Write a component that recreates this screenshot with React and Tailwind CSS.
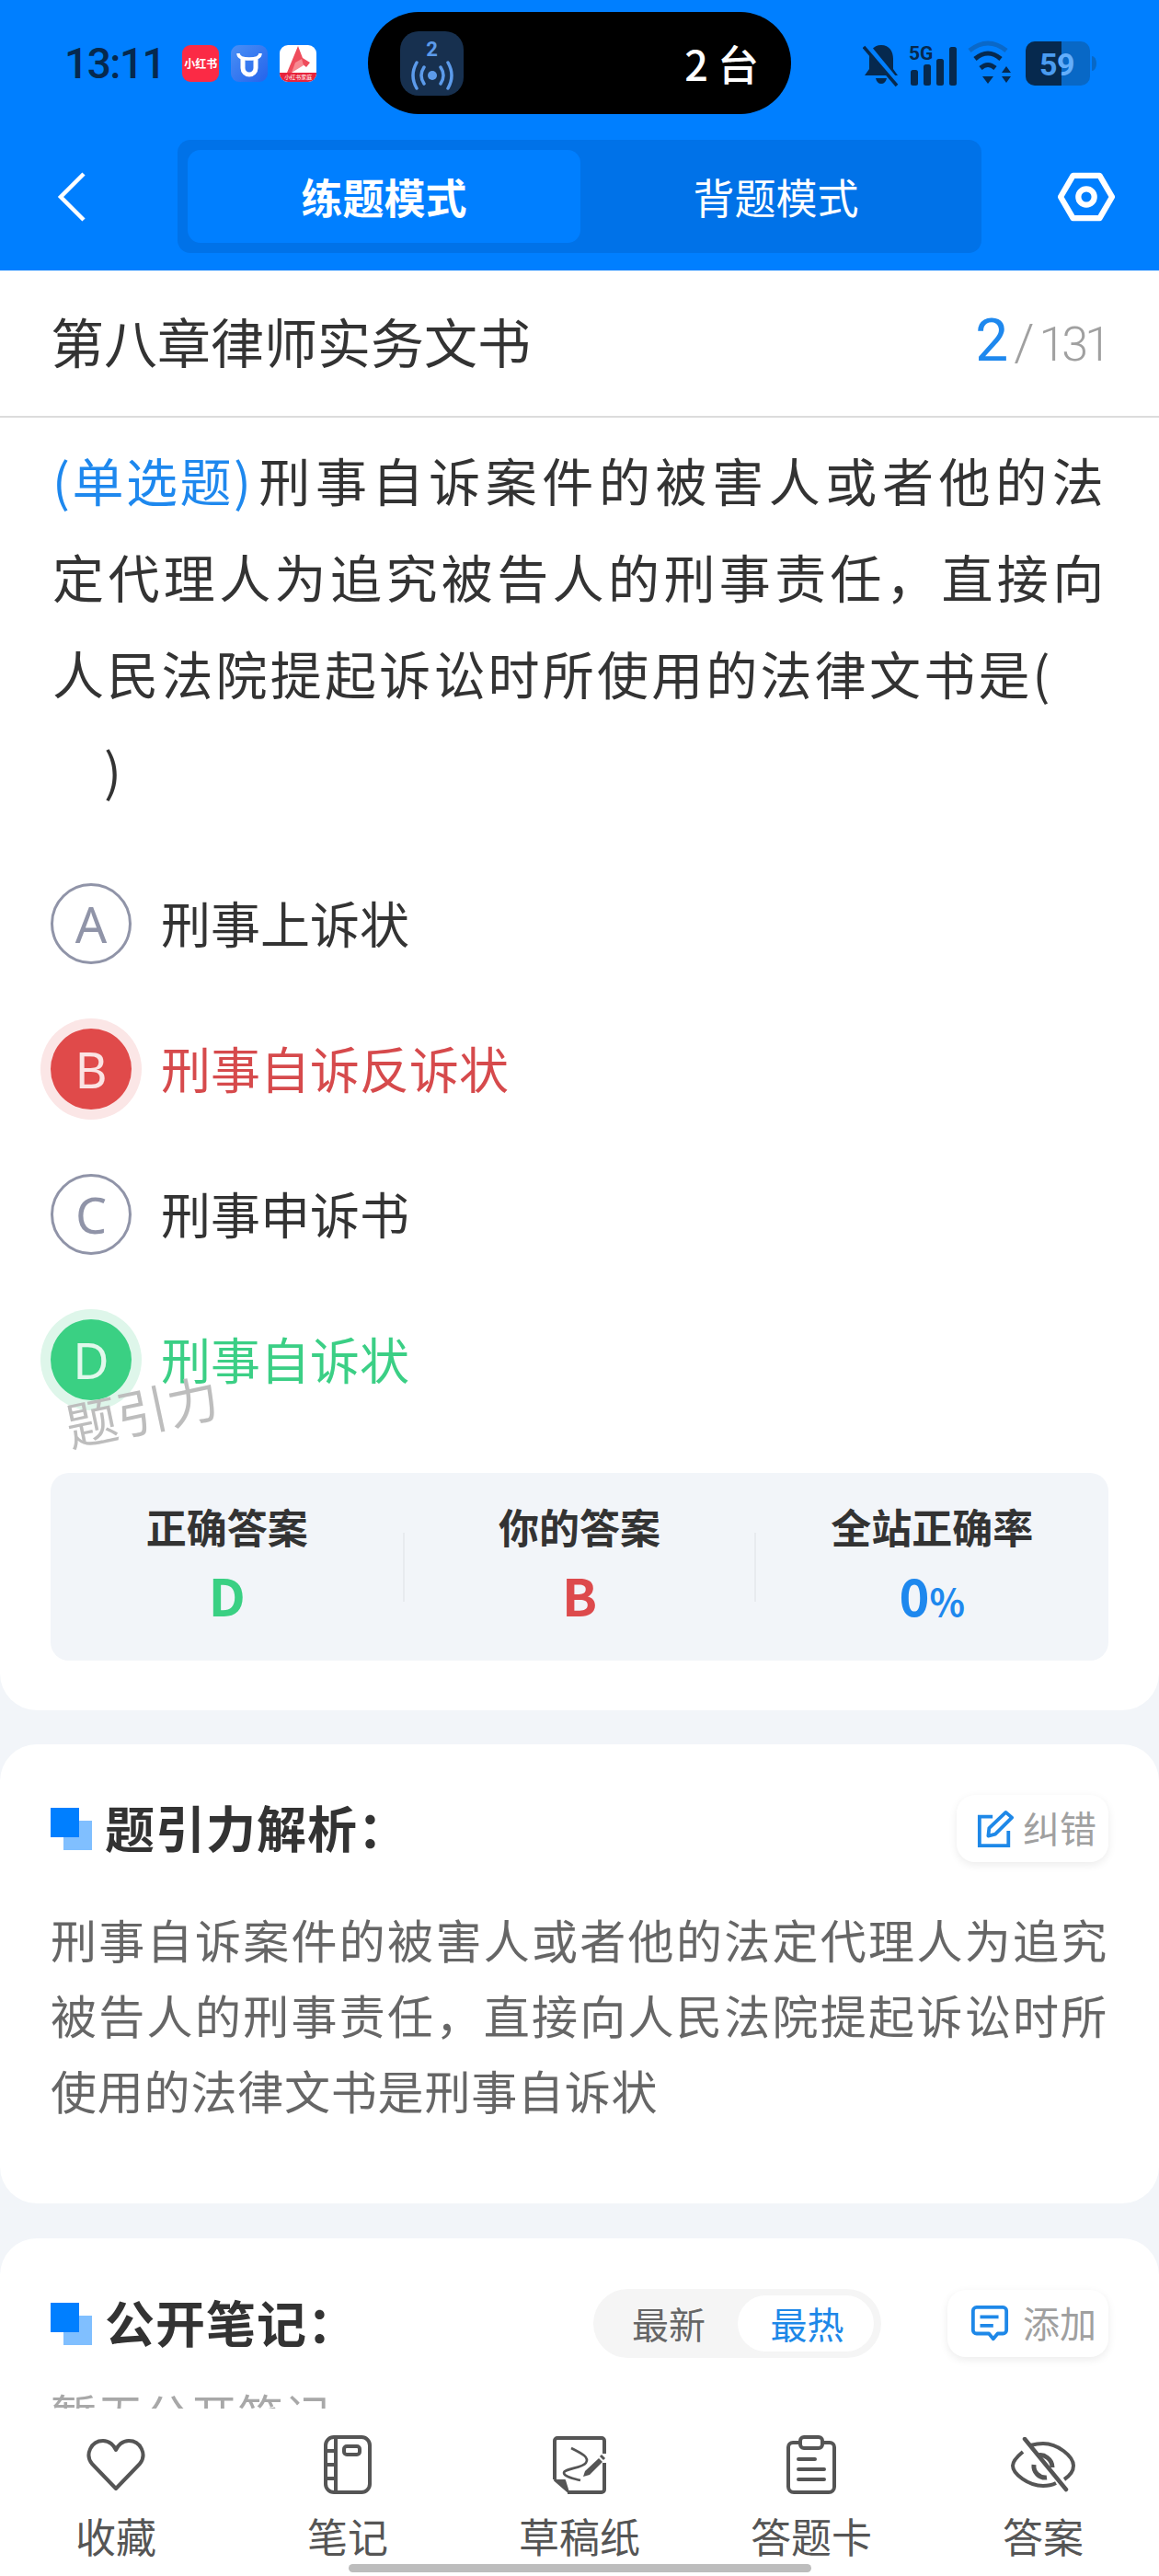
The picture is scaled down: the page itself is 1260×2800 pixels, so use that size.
import React from 'react';

const cjk = { fontFamily: '"Noto Sans CJK SC", "Noto Sans", sans-serif' };

function AppBadges() {
    return (
        <div className="flex items-center gap-[13px] ml-[19px]">
            <div className="w-[40px] h-[40px] rounded-[9px] bg-[#FB2A45] flex items-center justify-center">
                <span className="text-white text-[12px] font-bold leading-none whitespace-nowrap">小红书</span>
            </div>
            <div className="w-[40px] h-[40px] rounded-[9px] bg-gradient-to-br from-[#4A8FF5] to-[#2563EB] flex items-center justify-center">
                <svg viewBox="0 0 40 40" className="w-[40px] h-[40px]">
                    <path d="M8 9 C8 14 13 15 20 15 C27 15 32 14 32 9" stroke="#fff" strokeWidth="3.5" fill="none" />
                    <path d="M13 15 V25 a7 7 0 0 0 14 0 V15" fill="none" stroke="#fff" strokeWidth="5" />
                </svg>
            </div>
            <div className="w-[40px] h-[40px] rounded-[9px] bg-white overflow-hidden flex flex-col">
                <svg viewBox="0 0 40 30" className="w-[40px] h-[30px]">
                    <path d="M20 1 L25 14 L33 19 L29 24 L24 20 L13 30 H8 Z" fill="#EF4C5C" />
                    <path d="M17 19 L24 15 L26 22 L13 30 Z" fill="#F78A92" />
                </svg>
                <div className="h-[10px] bg-[#E8243C] flex items-center justify-center overflow-hidden">
                    <span className="text-white text-[6px] leading-none whitespace-nowrap">小红书家庭</span>
                </div>
            </div>
        </div>
    );
}

function StatusIcons() {
    return (
        <svg viewBox="0 0 270 56" className="w-[270px] h-[56px]">
            <g fill="#06294E">
                <path d="M20 8c9 0 13 7 13 15v11l5 7H2l5-7V23c0-8 4-15 13-15z" />
                <path d="M14 44h12c-1 4-3 6-6 6s-5-2-6-6z" />
            </g>
            <path d="M2 6 L38 50" stroke="#007FFF" strokeWidth="7" />
            <path d="M1 10 L37 52" stroke="#06294E" strokeWidth="3.5" />
            <text x="50" y="24" fontSize="21" fontWeight="700" fill="#06294E" fontFamily="Roboto, sans-serif">5G</text>
            <g fill="#06294E">
                <rect x="52" y="35" width="8" height="17" rx="2.5" />
                <rect x="66" y="29" width="8" height="23" rx="2.5" />
                <rect x="80" y="23" width="8" height="29" rx="2.5" />
                <rect x="94" y="10" width="8" height="42" rx="2.5" />
            </g>
            <path d="M116 14 Q136 -2 156 14" stroke="#0A68C8" strokeWidth="5" fill="none" />
            <path d="M122 23 Q136 11 150 23" stroke="#06294E" strokeWidth="5" fill="none" />
            <path d="M128 33 Q136 26 144 33" stroke="#06294E" strokeWidth="5" fill="none" />
            <path d="M130 42 h12 l-6 8z" fill="#06294E" />
            <path d="M151 38 l5 -7 5 7z M151 42 h10 l-5 7z" fill="#06294E" />
            <rect x="177" y="4" width="70" height="48" rx="10" fill="#0868C6" />
            <path d="M187 4 H216 V52 H187 a10 10 0 0 1 -10 -10 V14 a10 10 0 0 1 10 -10z" fill="#06294E" />
            <path d="M249 20 a5 8 0 0 1 0 16z" fill="#0868C6" />
            <text x="192" y="41" fontSize="34" fontWeight="700" fill="#4A9BF0" fontFamily="Roboto, sans-serif">5</text>
            <text x="211" y="41" fontSize="34" fontWeight="700" fill="#64AEFA" fontFamily="Roboto, sans-serif">9</text>
        </svg>
    );
}

function Header() {
    return (
        <div className="bg-[#007FFF] h-[294px] shrink-0">
            <div className="h-[152px] flex items-start pt-[13px]">
                <div className="w-[400px] pl-[70px] pt-[35px] flex items-center">
                    <span className="text-[46px] leading-[42px] font-medium text-[#06294E] tracking-[-1.5px]" style={{ fontFamily: 'Roboto, sans-serif' }}>13:11</span>
                    <AppBadges />
                </div>
                <div className="w-[460px] h-[111px] rounded-full bg-black flex items-center justify-between pl-[35px] pr-[35px]">
                    <div className="w-[69px] h-[70px] rounded-[20px] bg-[#17304F] flex flex-col items-center">
                        <span className="text-[#5C9BEB] text-[22px] font-bold leading-[22px] mt-[9px]" style={{ fontFamily: 'Roboto, sans-serif' }}>2</span>
                        <svg viewBox="0 0 52 34" className="w-[52px] h-[34px]" fill="none" stroke="#5C9BEB" strokeWidth="3.5" strokeLinecap="round">
                            <circle cx="26" cy="17" r="5" fill="#5C9BEB" stroke="none" />
                            <path d="M17 8 Q11 17 17 26 M35 8 Q41 17 35 26 M9 3 Q1 17 9 31 M43 3 Q51 17 43 31" />
                        </svg>
                    </div>
                    <span className="text-white text-[45px] font-medium leading-none" style={cjk}>2 台</span>
                </div>
                <div className="flex-1 pl-[78px] pt-[28px]">
                    <StatusIcons />
                </div>
            </div>
            <div className="h-[123px] flex items-center">
                <div className="w-[193px] pl-[62px]">
                    <svg viewBox="0 0 32 54" className="w-[32px] h-[54px]" fill="none" stroke="#fff" strokeWidth="4.5">
                        <path d="M29 2 L4 27 L29 52" />
                    </svg>
                </div>
                <div className="w-[874px] h-[123px] rounded-[14px] bg-[#0072E8] flex p-[11px]">
                    <div className="w-[427px] rounded-[14px] bg-[#007FFF] flex items-center justify-center text-white font-bold text-[45px]" style={cjk}>练题模式</div>
                    <div className="flex-1 flex items-center justify-center text-white text-[45px]" style={cjk}>背题模式</div>
                </div>
                <div className="flex-1 flex justify-end pr-[48px]">
                    <svg viewBox="0 0 64 56" className="w-[62px] h-[54px]" fill="none" stroke="#fff" strokeWidth="6.5" strokeLinejoin="round">
                        <path d="M3 28 L17 4 H47 L61 28 L47 52 H17 Z" />
                        <circle cx="32" cy="28" r="9" />
                    </svg>
                </div>
            </div>
        </div>
    );
}

function OptionRow({ letter, text, state }) {
    const textColor = state === 'wrong' ? 'text-[#D64A4C]' : state === 'right' ? 'text-[#3BCF85]' : 'text-[#333333]';
    let circle = 'border-[3px] border-[#9094A8] text-[#9094A8]';
    if (state === 'wrong') circle = 'bg-[#E04A4A] text-[#FBE3E3] shadow-[0_0_0_11px_#FBE6E6]';
    if (state === 'right') circle = 'bg-[#3AD083] text-[#E2F8EC] shadow-[0_0_0_11px_#DEF6EA]';
    return (
        <div className="h-[158px] flex items-center px-[55px]">
            <div className={`w-[88px] h-[88px] rounded-full flex items-center justify-center text-[54px] shrink-0 ${circle}`} style={{ fontFamily: '"Noto Sans", sans-serif' }}>
                {letter}
            </div>
            <span className={`ml-[32px] mb-[3px] text-[54px] leading-none ${textColor}`} style={cjk}>{text}</span>
        </div>
    );
}

function StatCell({ label, children }) {
    return (
        <div className="flex flex-col items-center justify-start pt-[33px]">
            <div className="text-[44px] font-bold leading-[50px] text-[#333333]" style={cjk}>{label}</div>
            <div className="mt-[18px] text-[56px] font-bold leading-[62px]" style={cjk}>{children}</div>
        </div>
    );
}

function SectionMark() {
    return (
        <div className="relative w-[45px] h-[46px] shrink-0">
            <div className="absolute right-0 bottom-0 w-[31px] h-[32px] bg-[#80BFFF]" />
            <div className="absolute left-0 top-0 w-[31px] h-[32px] bg-[#007FFF]" />
        </div>
    );
}

function GhostButton({ icon, label, className }) {
    return (
        <div className={`h-[73px] rounded-[20px] bg-white shadow-[0_3px_10px_rgba(0,0,0,0.08)] flex items-center ${className}`}>
            {icon}
            <span className="text-[40px] leading-none text-[#A0A0A0] mb-[3px]" style={cjk}>{label}</span>
        </div>
    );
}

const tabs = [
    {
        label: '收藏',
        icon: (
            <svg viewBox="0 0 66 60" className="w-[66px] h-[60px]" fill="none" stroke="#555" strokeWidth="4">
                <path d="M33 56 L7 29 C-1 19 6 4 19 4 C26 4 31 9 33 14 C35 9 40 4 47 4 C60 4 67 19 59 29 Z" strokeLinejoin="round" />
            </svg>
        ),
    },
    {
        label: '笔记',
        icon: (
            <svg viewBox="0 0 52 64" className="w-[52px] h-[64px]" fill="none" stroke="#555" strokeWidth="4">
                <rect x="2" y="2" width="48" height="60" rx="9" />
                <path d="M13 2 V62 M2 17 H13 M2 32 H13 M2 47 H13" />
                <rect x="22" y="12" width="17" height="9" rx="3" />
            </svg>
        ),
    },
    {
        label: '草稿纸',
        icon: (
            <svg viewBox="10 14 62 68" className="w-[62px] h-[68px]" fill="none" stroke="#555" strokeWidth="4">
                <path d="M68 36 V22 a3 3 0 0 0 -3 -3 H17 a3 3 0 0 0 -3 3 V64 M28 78 H65 a3 3 0 0 0 3 -3 V46" />
                <path d="M14 65 H25 L29 78 Z" fill="#555" stroke="#555" strokeWidth="2" strokeLinejoin="round" />
                <path d="M32 30 C44 36 52 40 48 46 C44 52 24 52 24 57 C24 61 34 63 42 65" strokeWidth="2.6" />
                <path d="M47 55 L62 41 L66 45 L52 59 L45 61 Z" fill="#555" stroke="none" />
                <path d="M64 38 L68 42" strokeWidth="3" />
            </svg>
        ),
    },
    {
        label: '答题卡',
        icon: (
            <svg viewBox="0 0 56 64" className="w-[56px] h-[64px]" fill="none" stroke="#555" strokeWidth="4">
                <path d="M15 8 H8 a5 5 0 0 0 -5 5 V56 a6 6 0 0 0 6 6 H47 a6 6 0 0 0 6 -6 V13 a5 5 0 0 0 -5 -5 H41" />
                <rect x="16" y="2" width="24" height="12" rx="4" />
                <path d="M14 26 H32 M14 37 H42 M14 48 H42" strokeLinecap="round" />
            </svg>
        ),
    },
    {
        label: '答案',
        icon: (
            <svg viewBox="0 0 72 60" className="w-[72px] h-[60px]" fill="none" stroke="#555" strokeWidth="4">
                <path d="M14 16 C8 21 3 27 3 31 C3 40 20 53 36 53 C41 53 46 52 50 50" />
                <path d="M22 9 C26 8 31 7 36 7 C52 7 69 21 69 31 C69 36 65 42 59 46" />
                <path d="M16 2 L61 57" strokeLinecap="round" strokeWidth="4.5" />
                <path d="M30 20 C37 18 46 24 46 33 M26 30 C25 38 32 45 40 44" strokeWidth="5" />
            </svg>
        ),
    },
];

export default function App() {
    return (
        <div className="w-[1260px] h-[2800px] flex flex-col bg-white overflow-hidden" style={cjk}>
            <Header />

            <main className="flex-1 min-h-0 overflow-hidden bg-[#F2F5F9]">
                {/* 题目 */}
                <div className="bg-white rounded-b-[40px] pb-[54px] relative">
                    <div className="h-[160px] flex items-center justify-between pl-[55px] pr-[56px] pb-[5px] border-b-2 border-[#DCDCDC]">
                        <h1 className="text-[58px] font-normal text-[#333333]">第八章律师实务文书</h1>
                        <div className="flex items-baseline" style={{ fontFamily: 'Roboto, sans-serif' }}>
                            <span className="text-[64px] leading-none text-[#1E88EE]">2</span>
                            <span className="text-[56px] leading-none text-[#A0A0A0] font-light ml-[6px]">/</span>
                            <span className="text-[52px] leading-none text-[#A0A0A0] font-light ml-[5px] tracking-[-4px]">131</span>
                        </div>
                    </div>

                    <div className="pt-[14px] pl-[57px] text-[56px] leading-[105px] text-[#333333] whitespace-nowrap">
                        <div className="tracking-[5.6px]">
                            <span className="text-[#1E88EE] tracking-[2.5px]">(单选题)</span>
                            <span className="ml-[6px]">刑事自诉案件的被害人或者他的法</span>
                        </div>
                        <div className="tracking-[4.4px]">定代理人为追究被告人的刑事责任，直接向</div>
                        <div className="tracking-[3.2px]">人民法院提起诉讼时所使用的法律文书是(</div>
                        <div className="pl-[56px]">)</div>
                    </div>

                    <div className="mt-[37px]">
                        <OptionRow letter="A" text="刑事上诉状" />
                        <OptionRow letter="B" text="刑事自诉反诉状" state="wrong" />
                        <OptionRow letter="C" text="刑事申诉书" />
                        <OptionRow letter="D" text="刑事自诉状" state="right" />
                    </div>

                    {/* 水印 */}
                    <div className="absolute left-[70px] top-[1210px] text-[56px] leading-none text-[#BDBDBD] rotate-[-12deg] whitespace-nowrap">题引力</div>

                    <div className="mt-[44px] mx-[55px] h-[204px] rounded-[20px] bg-[#F2F5F9] grid grid-cols-3">
                        <StatCell label="正确答案"><span className="text-[#3AD083]">D</span></StatCell>
                        <div className="relative">
                            <div className="absolute left-0 top-[65px] w-[2px] h-[75px] bg-[#E8EBEF]" />
                            <div className="absolute right-0 top-[65px] w-[2px] h-[75px] bg-[#E8EBEF]" />
                            <StatCell label="你的答案"><span className="text-[#DD4A4C]">B</span></StatCell>
                        </div>
                        <StatCell label="全站正确率">
                            <span className="text-[#1E88EE]">0<span className="text-[40px]">%</span></span>
                        </StatCell>
                    </div>
                </div>

                {/* 解析 */}
                <div className="mt-[37px] bg-white rounded-[40px] pt-[55px] pb-[83px] px-[55px]">
                    <div className="flex items-center justify-between">
                        <div className="flex items-center gap-[14px]">
                            <SectionMark />
                            <span className="mb-[4px] text-[54px] font-bold leading-none tracking-[1px] text-[#333333]">题引力解析：</span>
                        </div>
                        <GhostButton
                            className="w-[165px] pl-[22px] gap-[10px]"
                            label="纠错"
                            icon={
                                <svg viewBox="0 0 42 44" className="w-[40px] h-[42px]" fill="none" stroke="#1E88E8" strokeWidth="4">
                                    <path d="M18 8 H3 V41 H36 V24" />
                                    <path d="M13 30 L14 21 L33 3 L40 9 L21 28 Z" strokeLinejoin="round" />
                                </svg>
                            }
                        />
                    </div>
                    <p className="mt-[42px] text-[50px] leading-[82px] text-[#666666] whitespace-nowrap">
                        <span className="tracking-[2.3px]">刑事自诉案件的被害人或者他的法定代理人为追究</span><br />
                        <span className="tracking-[2.3px]">被告人的刑事责任，直接向人民法院提起诉讼时所</span><br />
                        <span className="tracking-[0.8px]">使用的法律文书是刑事自诉状</span>
                    </p>
                </div>

                {/* 公开笔记 */}
                <div className="mt-[38px] bg-white rounded-t-[40px] pt-[55px] px-[55px]">
                    <div className="flex items-center">
                        <SectionMark />
                        <span className="ml-[14px] mb-[4px] text-[54px] font-bold leading-none tracking-[1px] text-[#333333] whitespace-nowrap">公开笔记：</span>
                        <div className="ml-auto h-[75px] w-[313px] rounded-full bg-[#F5F5F5] flex items-center p-[7px]">
                            <div className="w-[150px] text-center text-[40px] leading-none text-[#666666] mb-[2px]">最新</div>
                            <div className="w-[148px] h-[61px] rounded-full bg-white flex items-center justify-center text-[40px] leading-none text-[#1E88E8]">
                                <span className="mb-[2px] ml-[3px]">最热</span>
                            </div>
                        </div>
                        <div className="ml-[72px]">
                            <GhostButton
                                className="w-[175px] pl-[25px] gap-[15px]"
                                label="添加"
                                icon={
                                    <svg viewBox="0 0 44 44" className="w-[42px] h-[42px]" fill="none" stroke="#1E88E8" strokeWidth="4">
                                        <path d="M7 3 H37 a4 4 0 0 1 4 4 V29 a4 4 0 0 1 -4 4 H31 L26 39 L21 33 H7 a4 4 0 0 1 -4 -4 V7 a4 4 0 0 1 4 -4 Z" strokeLinejoin="round" />
                                        <path d="M11 14 H32 M11 24 H26" />
                                    </svg>
                                }
                            />
                        </div>
                    </div>
                    <div className="mt-[30px] text-[50px] leading-[60px] tracking-[0.8px] text-[#A8A8A8]">暂无公开笔记</div>
                </div>
            </main>

            {/* 底部工具栏 */}
            <div className="h-[182px] shrink-0 bg-white flex flex-col">
                <div className="grid grid-cols-5 flex-1 pt-[27px]">
                    {tabs.map(tab => (
                        <div key={tab.label} className="flex flex-col items-center">
                            <div className="h-[68px] flex items-center">{tab.icon}</div>
                            <span className="mt-[21px] text-[44px] leading-none text-[#555555]">{tab.label}</span>
                        </div>
                    ))}
                </div>
                <div className="mx-auto mb-[4px] w-[503px] h-[9px] rounded-full bg-[#BDBDBD]" />
            </div>
        </div>
    );
}
